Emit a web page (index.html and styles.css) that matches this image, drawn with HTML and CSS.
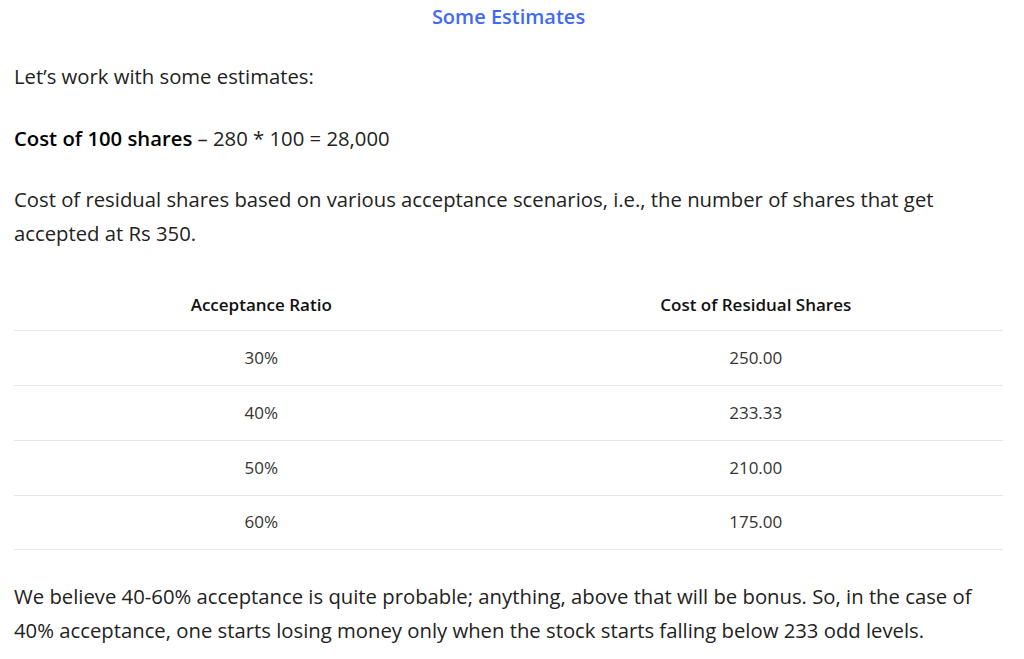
FILE: index.html
```html
<!DOCTYPE html>
<html lang="en">
<head>
  <meta charset="UTF-8" />
  <meta name="viewport" content="width=device-width, initial-scale=1.0"/>
  <title>Some Estimates</title>
  <link rel="stylesheet" href="styles.css">
</head>
<body>

  <div class="article">
    <h3 class="section-title">Some Estimates</h3>

    <p>Let’s work with some estimates:</p>

    <p><strong>Cost of 100 shares</strong> – 280 * 100 = 28,000</p>

    <p>Cost of residual shares based on various acceptance scenarios, i.e., the number of shares that get accepted at Rs 350.</p>

    <table class="estimates">
      <thead>
        <tr>
          <th>Acceptance Ratio</th>
          <th>Cost of Residual Shares</th>
        </tr>
      </thead>
      <tbody>
        <tr><td>30%</td><td>250.00</td></tr>
        <tr><td>40%</td><td>233.33</td></tr>
        <tr><td>50%</td><td>210.00</td></tr>
        <tr><td>60%</td><td>175.00</td></tr>
      </tbody>
    </table>

    <p>We believe 40-60% acceptance is quite probable; anything, above that will be bonus. So, in the case of 40% acceptance, one starts losing money only when the stock starts falling below 233 odd levels.</p>
  </div>

</body>
</html>
```

FILE: styles.css
```css
* {
  box-sizing: border-box;
}

body {
  margin: 0;
  font-family: 'Open Sans', sans-serif;
  background: #ffffff;
  color: #222222;
}

.article {
  padding: 0 21px 0 14px;
  font-size: 20.3px;
  line-height: 34px;
}

.section-title {
  margin: 0 0 -1.5px;
  padding-top: 1px;
  font-size: 20px;
  font-weight: 600;
  line-height: 32px;
  color: #3f6af5;
  text-align: center;
}

.article p {
  margin: 27.5px 0;
}

.article strong {
  font-weight: 600;
  color: #000;
}

.estimates {
  width: 100%;
  border-collapse: collapse;
  table-layout: fixed;
  margin-top: -1.5px;
  margin-bottom: 29px;
  font-size: 17px;
  line-height: 24px;
}

.estimates th,
.estimates td {
  height: 54.75px;
  text-align: center;
  vertical-align: middle;
  padding: 0;
}

.estimates th {
  padding-top: 4px;
  font-weight: 600;
  color: #111;
  border-bottom: 1px solid #e6e6e6;
}

.estimates td {
  color: #333;
  border-bottom: 1px solid #e6e6e6;
}
```
